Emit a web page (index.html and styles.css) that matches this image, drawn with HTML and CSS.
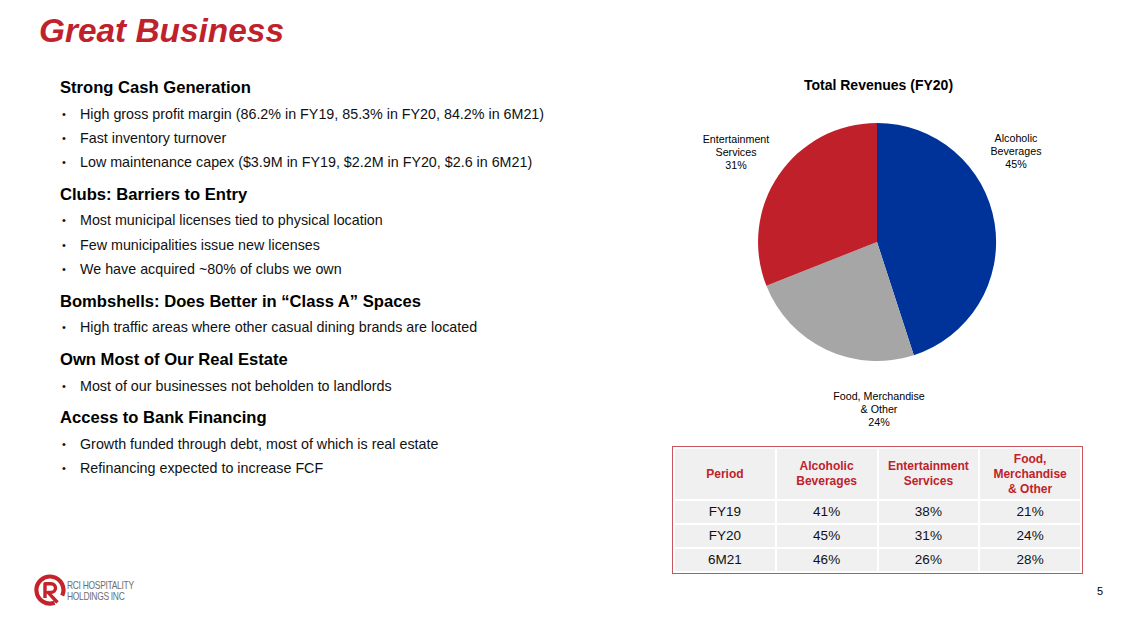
FILE: index.html
```html
<!DOCTYPE html>
<html lang="en">
<head>
<meta charset="utf-8">
<title>Great Business</title>
<link rel="stylesheet" href="styles.css">
</head>
<body>
<div class="slide">
  <h1 class="title">Great Business</h1>
  <div class="content">
    <div class="left">
      <section class="sec">
        <h2>Strong Cash Generation</h2>
        <ul>
          <li><span class="dot">•</span><span>High gross profit margin (86.2% in FY19, 85.3% in FY20, 84.2% in 6M21)</span></li>
          <li><span class="dot">•</span><span>Fast inventory turnover</span></li>
          <li><span class="dot">•</span><span>Low maintenance capex ($3.9M in FY19, $2.2M in FY20, $2.6 in 6M21)</span></li>
        </ul>
      </section>
      <section class="sec">
        <h2>Clubs: Barriers to Entry</h2>
        <ul>
          <li><span class="dot">•</span><span>Most municipal licenses tied to physical location</span></li>
          <li><span class="dot">•</span><span>Few municipalities issue new licenses</span></li>
          <li><span class="dot">•</span><span>We have acquired ~80% of clubs we own</span></li>
        </ul>
      </section>
      <section class="sec">
        <h2>Bombshells: Does Better in “Class A” Spaces</h2>
        <ul>
          <li><span class="dot">•</span><span>High traffic areas where other casual dining brands are located</span></li>
        </ul>
      </section>
      <section class="sec">
        <h2>Own Most of Our Real Estate</h2>
        <ul>
          <li><span class="dot">•</span><span>Most of our businesses not beholden to landlords</span></li>
        </ul>
      </section>
      <section class="sec">
        <h2>Access to Bank Financing</h2>
        <ul>
          <li><span class="dot">•</span><span>Growth funded through debt, most of which is real estate</span></li>
          <li><span class="dot">•</span><span>Refinancing expected to increase FCF</span></li>
        </ul>
      </section>
    </div>
    <div class="right">
      <div class="chart-title">Total Revenues (FY20)</div>
      <svg class="pie" width="413" height="335" viewBox="0 0 413 335">
        <path class="s-alc" d="M205,142 L205,23 A119,119 0 0 1 241.8,255.2 Z"/>
        <path class="s-food" d="M205,142 L241.8,255.2 A119,119 0 0 1 94.4,185.8 Z"/>
        <path class="s-ent" d="M205,142 L94.4,185.8 A119,119 0 0 1 205,23 Z"/>
        <g class="lbl">
          <text x="344" y="42">Alcoholic</text>
          <text x="344" y="55">Beverages</text>
          <text x="344" y="68">45%</text>
          <text x="64" y="43">Entertainment</text>
          <text x="64" y="56">Services</text>
          <text x="64" y="69">31%</text>
          <text x="207" y="300">Food, Merchandise</text>
          <text x="207" y="313">&amp; Other</text>
          <text x="207" y="326">24%</text>
        </g>
      </svg>
      <table class="rev">
        <thead>
          <tr><th>Period</th><th>Alcoholic<br>Beverages</th><th>Entertainment<br>Services</th><th>Food,<br>Merchandise<br>&amp; Other</th></tr>
        </thead>
        <tbody>
          <tr><td>FY19</td><td>41%</td><td>38%</td><td>21%</td></tr>
          <tr><td>FY20</td><td>45%</td><td>31%</td><td>24%</td></tr>
          <tr><td>6M21</td><td>46%</td><td>26%</td><td>28%</td></tr>
        </tbody>
      </table>
    </div>
  </div>
  <footer class="footer">
    <div class="logo">
      <svg class="logo-mark" width="32" height="32" viewBox="0 0 32 32">
        <path d="M20.6,28.7 A13.5,13.5 0 1 1 28.2,21.7" fill="none" stroke="#c4232b" stroke-width="4.2"/>
        <path d="M11,24 V9.8 H17.2 A4.3,4.3 0 0 1 17.2,18.4 H14 L23.5,28.5" fill="none" stroke="#c4232b" stroke-width="3.4" stroke-linejoin="round"/>
      </svg>
      <div class="logo-text"><span>RCI HOSPITALITY</span><span>HOLDINGS INC</span></div>
    </div>
    <div class="pagenum">5</div>
  </footer>
</div>
</body>
</html>
```

FILE: styles.css
```css
html, body {
  margin: 0;
  padding: 0;
  background: #ffffff;
}
body {
  font-family: "Liberation Sans", Arial, sans-serif;
  color: #000;
}
.slide {
  width: 1129px;
  height: 618px;
  display: flex;
  flex-direction: column;
  overflow: hidden;
}
.title {
  margin: 0;
  padding: 11px 0 0 39px;
  font-size: 33.4px;
  line-height: 40px;
  font-weight: bold;
  font-style: italic;
  color: #c0222b;
}
.content {
  display: flex;
  justify-content: space-between;
}
.left {
  padding: 27px 0 0 60px;
}
.sec {
  margin-bottom: 10.4px;
}
.sec h2 {
  margin: 0 0 3.6px 0;
  font-size: 16.6px;
  line-height: 20px;
  font-weight: bold;
}
.sec ul {
  list-style: none;
  margin: 0;
  padding: 0;
}
.sec li {
  display: flex;
  font-size: 14.3px;
  line-height: 24.3px;
  color: #111;
}
.dot {
  width: 20px;
  flex: none;
  padding-left: 2px;
  box-sizing: border-box;
  font-size: 11px;
}
.right {
  width: 413px;
  margin-right: 44px;
  padding-top: 25px;
  display: flex;
  flex-direction: column;
}
.chart-title {
  text-align: center;
  font-size: 14px;
  line-height: 18px;
  font-weight: bold;
}
.pie {
  display: block;
  margin-top: 6px;
}
.s-alc { fill: #003399; }
.s-food { fill: #a6a6a6; }
.s-ent { fill: #c0202a; }
.lbl text {
  font-family: "Liberation Sans", Arial, sans-serif;
  font-size: 10.7px;
  fill: #000;
  text-anchor: middle;
}
.rev {
  margin-top: 11px;
  width: 411px;
  border: 1px solid #c9545a;
  border-collapse: separate;
  border-spacing: 2px;
  background: #fff;
  table-layout: fixed;
}
.rev th, .rev td {
  background: #f0f0f0;
  text-align: center;
  vertical-align: middle;
  padding: 0;
}
.rev th {
  height: 50px;
  color: #c0222b;
  font-size: 12px;
  line-height: 15px;
  font-weight: bold;
}
.rev td {
  height: 22px;
  font-size: 13.5px;
  line-height: 16px;
  color: #111;
}
.footer {
  margin-top: auto;
  height: 32px;
  padding: 0 26px 13px 34px;
  display: flex;
  align-items: center;
  justify-content: space-between;
}
.logo {
  display: flex;
  align-items: center;
  gap: 1px;
}
.logo-mark {
  display: block;
}
.logo-text {
  display: flex;
  flex-direction: column;
  font-size: 11px;
  line-height: 11px;
  letter-spacing: -0.4px;
  color: #6e6e6e;
  padding-top: 2px;
  transform: scaleX(0.77);
  transform-origin: left center;
  white-space: nowrap;
}
.pagenum {
  font-size: 11px;
  line-height: 14px;
  color: #000;
  padding-top: 1px;
}
```
